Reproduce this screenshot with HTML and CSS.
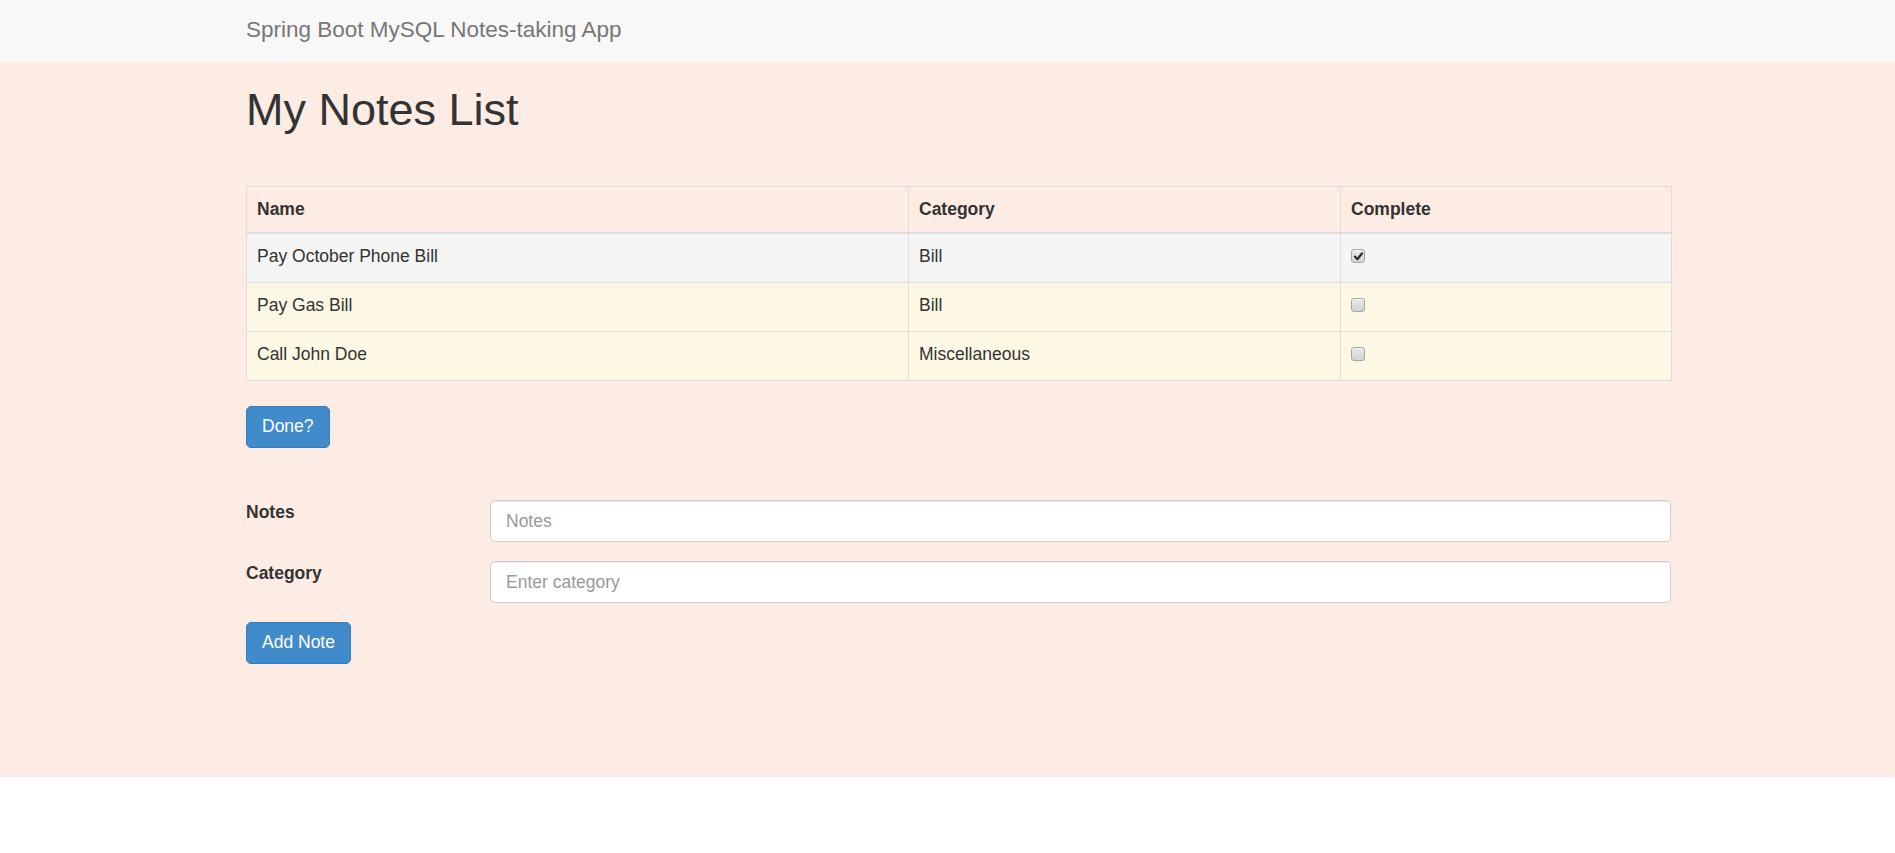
FILE: index.html
```html
<!DOCTYPE html>
<html lang="en">
<head>
<meta charset="utf-8">
<title>Spring Boot MySQL Notes-taking App</title>
<link rel="stylesheet" href="styles.css">
</head>
<body>
<nav class="navbar">
  <div class="container">
    <a class="brand" href="#">Spring Boot MySQL Notes-taking App</a>
  </div>
</nav>
<main class="main">
  <div class="container">
    <h1 class="title">My Notes List</h1>
    <hr class="rule rule-top">
    <table class="notes">
      <colgroup>
        <col class="c-name">
        <col class="c-cat">
        <col class="c-done">
      </colgroup>
      <thead>
        <tr><th>Name</th><th>Category</th><th>Complete</th></tr>
      </thead>
      <tbody>
        <tr class="row-active">
          <td>Pay October Phone Bill</td><td>Bill</td>
          <td><span class="check is-checked" role="checkbox" aria-checked="true"><svg viewBox="0 0 13 13" width="13" height="13"><path d="M3 6.6 L5.4 9.2 L10 3.4" fill="none" stroke="#262626" stroke-width="2.2" stroke-linecap="round" stroke-linejoin="round"/></svg></span></td>
        </tr>
        <tr class="row-warning">
          <td>Pay Gas Bill</td><td>Bill</td>
          <td><span class="check" role="checkbox" aria-checked="false"></span></td>
        </tr>
        <tr class="row-warning">
          <td>Call John Doe</td><td>Miscellaneous</td>
          <td><span class="check" role="checkbox" aria-checked="false"></span></td>
        </tr>
      </tbody>
    </table>
    <button class="btn" type="button">Done?</button>
    <hr class="rule rule-mid">
    <form class="note-form">
      <div class="form-row">
        <label class="form-label" for="notes">Notes</label>
        <input class="form-input" id="notes" type="text" placeholder="Notes">
      </div>
      <div class="form-row">
        <label class="form-label" for="category">Category</label>
        <input class="form-input" id="category" type="text" placeholder="Enter category">
      </div>
      <div class="form-actions">
        <button class="btn" type="button">Add Note</button>
      </div>
    </form>
  </div>
</main>
</body>
</html>
```
FILE: styles.css
```css
* { box-sizing: border-box; }
html, body { margin: 0; padding: 0; }
body {
  font-family: "Liberation Sans", Arial, Helvetica, sans-serif;
  font-size: 17.5px;
  line-height: 25px;
  color: #333;
  background: #fff;
}
.container {
  width: 1425px;
  margin-left: 246px;
}
.navbar {
  height: 62px;
  background: #f8f8f8;
}
.brand {
  display: inline-block;
  margin-left: 0;
  padding-top: 17px;
  font-size: 22.5px;
  line-height: 25px;
  color: #777;
  text-decoration: none;
}
.main {
  background: #fdece4;
  padding-bottom: 113px;
}
.title {
  margin: 0;
  padding-top: 23px;
  font-size: 45px;
  line-height: 49px;
  font-weight: 500;
  color: #333;
}
.rule {
  border: 0;
  border-top: 1px solid #f2e9e5;
  height: 0;
  margin: 0;
}
.rule-top { margin: 26px 0 25px; }
.rule-mid { margin: 25px 0 26px; }
.notes {
  width: 1425px;
  border-collapse: collapse;
  border: 1px solid #ddd;
  table-layout: fixed;
  margin-bottom: 25px;
}
.c-name { width: 662px; }
.c-cat { width: 432px; }
.c-done { width: 331px; }
.notes th, .notes td {
  text-align: left;
  border: 1px solid #ddd;
  vertical-align: top;
  line-height: 25px;
}
.notes th {
  padding: 10px;
  font-weight: bold;
  border-bottom: 2px solid #ddd;
}
.notes td { padding: 10px 10px 13px; }
.row-active td { background: #f5f5f5; }
.row-warning td { background: #fcf8e3; }
.check {
  display: block;
  width: 14px;
  height: 14px;
  margin-top: 5px;
  border: 1px solid #a6a6a6;
  border-radius: 3px;
  background: linear-gradient(#e9e9e9, #d3d3d3);
  box-shadow: inset 0 1px 0 rgba(255,255,255,0.6);
}
.check svg { display: block; margin: -0.5px 0 0 -0.5px; }
.btn {
  display: inline-block;
  font-family: inherit;
  font-size: 17.5px;
  line-height: 25px;
  padding: 7px 15px 8px;
  color: #fff;
  background: #428bca;
  border: 1px solid #357ebd;
  border-radius: 5px;
  cursor: pointer;
}
.note-form { display: flex; flex-direction: column; }
.form-row {
  display: grid;
  grid-template-columns: 244px 1fr;
  align-items: start;
  margin-bottom: 19px;
}
.form-row:first-child { margin-top: 0; }
.form-label {
  font-weight: bold;
  line-height: 25px;
}
.form-input {
  height: 42px;
  width: 100%;
  padding: 7px 15px;
  font-family: inherit;
  font-size: 17.5px;
  line-height: 25px;
  color: #555;
  background: #fff;
  border: 1px solid #ccc;
  border-radius: 5px;
  box-shadow: inset 0 1px 1px rgba(0,0,0,0.075);
}
.form-input::placeholder { color: #999; }
.form-actions { display: flex; }
```
